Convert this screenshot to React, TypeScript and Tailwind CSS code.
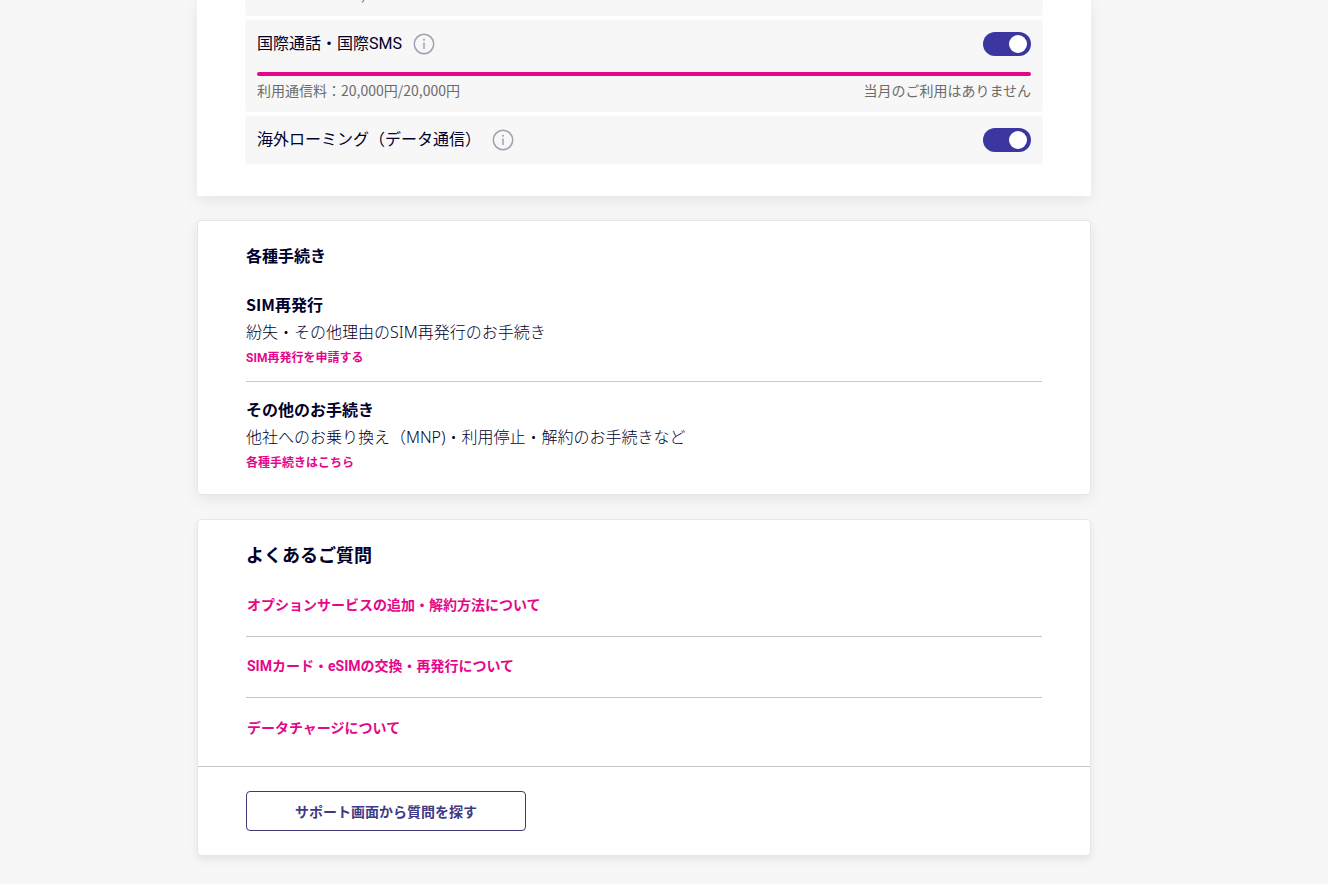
import React, { useState } from 'react';

const procedures = [
  {
    title: 'SIM再発行',
    text: '紛失・その他理由のSIM再発行のお手続き',
    link: 'SIM再発行を申請する',
  },
  {
    title: 'その他のお手続き',
    text: '他社へのお乗り換え（MNP)・利用停止・解約のお手続きなど',
    link: '各種手続きはこちら',
  },
];

const questions = [
  'オプションサービスの追加・解約方法について',
  'SIMカード・eSIMの交換・再発行について',
  'データチャージについて',
];

const InfoIcon = () => (
  <svg width="24" height="24" viewBox="0 0 24 24" fill="none" stroke="#a09fb0">
    <circle cx="12" cy="12" r="9.7" strokeWidth="1.5" />
    <path d="M12 10.5V17" strokeWidth="1.5" />
    <circle cx="12" cy="7.8" r="1" fill="#a09fb0" stroke="none" />
  </svg>
);

const OptionHeader = ({ id, label }: { id: string; label: string }) => {
  const [enabled, setEnabled] = useState(true);

  return (
    <div className="flex h-6 items-center">
      <label htmlFor={id} className="font-['Roboto','Noto_Sans_CJK_JP',sans-serif] text-base leading-6">
        {label}
      </label>
      <button type="button" className="ml-2.5" title={label}>
        <InfoIcon />
      </button>
      <input
        id={id}
        type="checkbox"
        checked={enabled}
        onChange={(e) => setEnabled(e.target.checked)}
        className="ml-auto flex h-6 w-12 shrink-0 appearance-none items-center rounded-full bg-gray-400 px-1 before:size-[18px] before:rounded-full before:bg-white checked:justify-end checked:bg-[#3b36a0]"
      />
    </div>
  );
};

const App = () => {
  return (
    <div className="min-h-screen bg-[#f7f7f7] pr-10 pb-7 font-['Noto_Sans_CJK_JP',sans-serif] text-[#00002a]">
      <main className="mx-auto flex max-w-[894px] flex-col gap-6">
        <section className="flex flex-col gap-1 bg-white px-12 pb-8 shadow-[0_4px_16px_rgba(0,0,0,0.08)]">
          <div className="h-4 overflow-hidden rounded-b bg-[#f7f7f7] px-3">
            <p className="-mt-4 pl-26 text-sm leading-5 text-[#6b6b6b]">,</p>
          </div>
          <div className="rounded bg-[#f7f7f7] p-3">
            <OptionHeader id="call" label="国際通話・国際SMS" />
            <div className="mt-4 h-1 rounded-full bg-[#e4078a]" />
            <div className="mt-1 flex justify-between text-sm leading-5 text-[#6b6b6b]">
              <p>利用通信料：20,000円/20,000円</p>
              <p>当月のご利用はありません</p>
            </div>
          </div>
          <div className="rounded bg-[#f7f7f7] p-3">
            <OptionHeader id="roaming" label="海外ローミング（データ通信）" />
          </div>
        </section>

        <section className="rounded border border-[#e6e6e6] bg-white px-12 pt-[22px] pb-2 shadow-[0_4px_16px_rgba(0,0,0,0.08)]">
          <h2 className="text-base leading-6 font-bold">各種手続き</h2>
          <div className="mt-2.5 divide-y divide-[#c8c8cc]">
            {procedures.map((item) => (
              <div key={item.title} className="pt-[15px] pb-[13px]">
                <h3 className="text-base leading-6 font-bold">{item.title}</h3>
                <p className="mt-1 font-['Noto_Sans','Noto_Sans_CJK_JP',sans-serif] text-base leading-6 font-light">
                  {item.text}
                </p>
                <a href="#" className="mt-1 block w-fit font-['Roboto','Noto_Sans_CJK_JP',sans-serif] text-xs leading-5 font-bold text-[#e4078a]">
                  {item.link}
                </a>
              </div>
            ))}
          </div>
        </section>

        <section className="rounded border border-[#e6e6e6] bg-white shadow-[0_4px_8px_rgba(0,0,0,0.08)]">
          <div className="px-12 pt-[22px] pb-[7px]">
            <h2 className="text-lg leading-6 font-bold">よくあるご質問</h2>
            <ul className="mt-2.5 divide-y divide-[#c8c8cc]">
              {questions.map((q) => (
                <li key={q} className="flex h-[61px] items-center pb-0.5 pl-px">
                  <a href="#" className="font-['Roboto','Noto_Sans_CJK_JP',sans-serif] text-sm leading-5 font-bold text-[#e4078a]">
                    {q}
                  </a>
                </li>
              ))}
            </ul>
          </div>
          <div className="border-t border-[#c8c8cc] px-12 py-6">
            <button type="button" className="h-10 w-70 rounded border border-[#3f3a75] text-sm font-bold text-[#3f3a85]">
              サポート画面から質問を探す
            </button>
          </div>
        </section>
      </main>
    </div>
  );
};

export default App;
